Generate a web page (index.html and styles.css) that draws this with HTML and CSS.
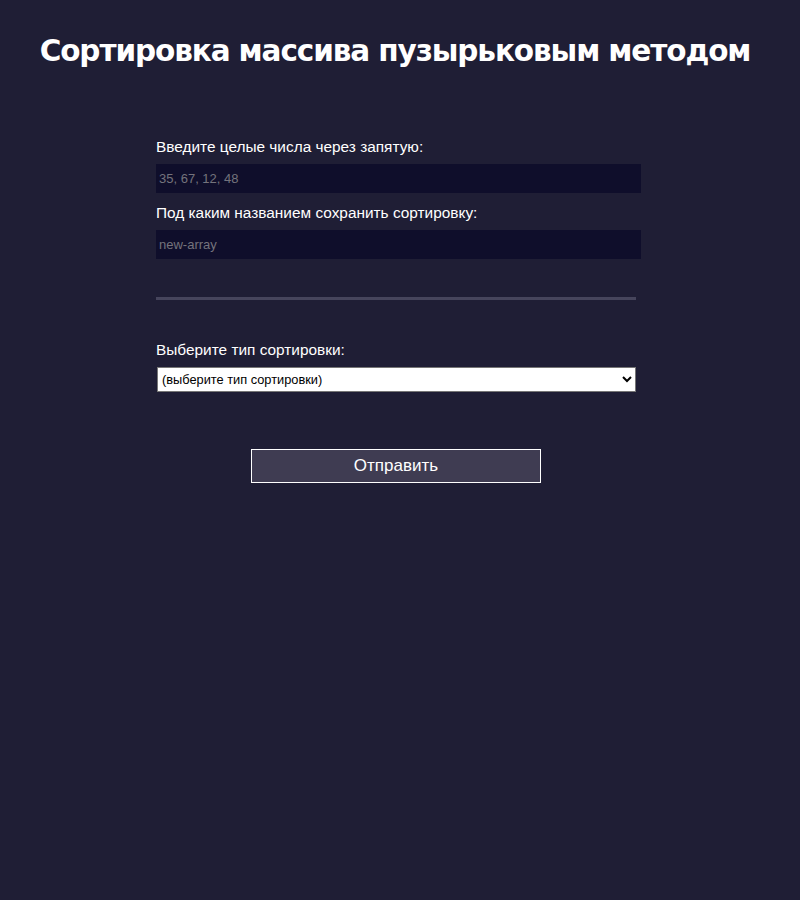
FILE: index.html
```html
<!DOCTYPE html>
<html lang="ru">
<head>
<meta charset="utf-8">
<title>Сортировка массива</title>
<link rel="stylesheet" href="styles.css">
</head>
<body>
<h1 class="title">Сортировка массива пузырьковым методом</h1>
<form class="form">
  <label class="label" for="nums">Введите целые числа через запятую:</label>
  <input class="field" id="nums" type="text" placeholder="35, 67, 12, 48">
  <label class="label label-second" for="name">Под каким названием сохранить сортировку:</label>
  <input class="field" id="name" type="text" placeholder="new-array">
  <div class="divider"></div>
  <label class="label label-select" for="type">Выберите тип сортировки:</label>
  <select class="select" id="type">
    <option>(выберите тип сортировки)</option>
  </select>
  <div class="actions">
    <button class="submit" type="button">Отправить</button>
  </div>
</form>
</body>
</html>
```
FILE: styles.css
```css
html, body {
  margin: 0;
  padding: 0;
  background: #1f1e35;
  min-height: 100%;
}
body {
  font-family: "Liberation Sans", Arial, sans-serif;
  color: #ffffff;
}
.title {
  margin: 0;
  padding-top: 32px;
  text-align: center;
  font-family: "DejaVu Sans", Verdana, sans-serif;
  font-weight: bold;
  font-size: 29.5px;
  letter-spacing: -1.1px;
  line-height: 38px;
  color: #ffffff;
  padding-right: 10px;
}
.form {
  width: 485px;
  margin: 68px 0 0 156px;
  display: flex;
  flex-direction: column;
}
.label {
  font-size: 15.4px;
  line-height: 17px;
  color: #ffffff;
  margin-bottom: 9px;
}
.label-second {
  margin-top: 11px;
}
.field {
  box-sizing: border-box;
  height: 29px;
  width: 485px;
  border: none;
  outline: none;
  background: #0f0e2b;
  color: #ffffff;
  font-family: "Liberation Sans", Arial, sans-serif;
  font-size: 13px;
  padding: 0 3px;
}
.field::placeholder {
  color: #74737c;
}
.divider {
  width: 480px;
  height: 3px;
  background: #46455c;
  margin-top: 38px;
}
.label-select {
  margin-top: 41px;
  margin-bottom: 9px;
}
.select {
  box-sizing: border-box;
  width: 479px;
  height: 25px;
  margin-left: 1px;
  font-family: "Liberation Sans", Arial, sans-serif;
  font-size: 12.8px;
  background: #ffffff;
  color: #000000;
  border: 1px solid #767676;
  border-radius: 0;
}
.actions {
  display: flex;
  margin-top: 57px;
  padding-left: 95px;
}
.submit {
  width: 290px;
  height: 34px;
  background: #3f3c52;
  border: 1px solid #ffffff;
  color: #ffffff;
  font-family: "Liberation Sans", Arial, sans-serif;
  font-size: 17px;
  cursor: pointer;
}
```
